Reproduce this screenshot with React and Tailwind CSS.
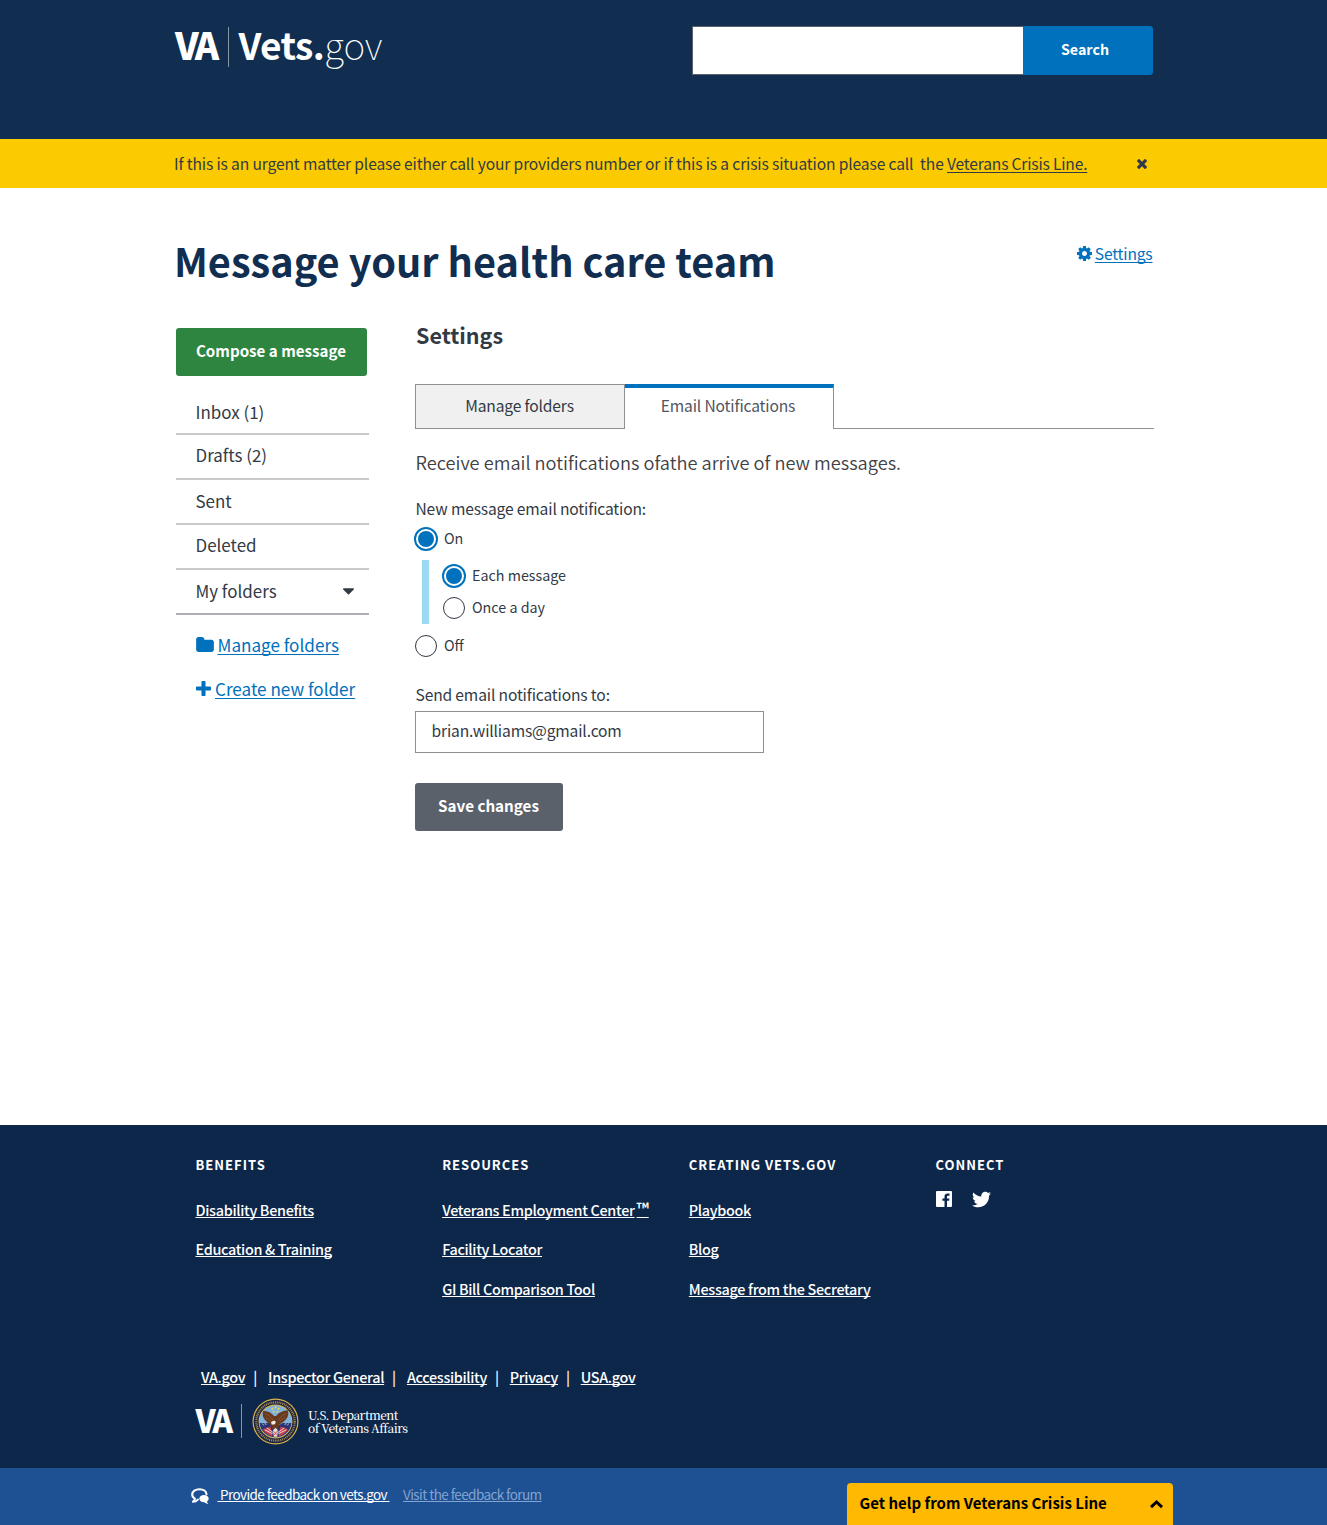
import React from "react";
import { FaCaretDown, FaTwitter } from "react-icons/fa";

const link =
  "underline decoration-1 underline-offset-2 [text-decoration-skip-ink:none]";
const footLink =
  "underline decoration-1 underline-offset-1 [text-decoration-skip-ink:none]";

function CogIcon({ className }) {
  return (
    <svg viewBox="0 128 1536 1536" className={className} fill="currentColor">
      <path d="M1024 896q0-106-75-181t-181-75-181 75-75 181 75 181 181 75 181-75 75-181zm512-109v222q0 12-8 23t-20 13l-185 28q-19 54-39 91 35 50 107 138 10 12 10 25t-9 23q-27 37-99 108t-94 71q-12 0-26-9l-138-108q-44 23-91 38-16 136-29 186-7 28-36 28h-222q-14 0-24.500-8.500t-11.500-21.500l-28-184q-49-16-90-37l-141 107q-10 9-25 9-14 0-25-11-126-114-165-168-7-10-7-23 0-12 8-23 15-21 51-66.500t54-70.500q-27-50-41-99l-183-27q-13-2-21-12.500t-8-23.500v-222q0-12 8-23t19-13l186-28q14-46 39-92-40-57-107-138-10-12-10-24 0-10 9-23 26-36 98.500-107.500t94.500-71.500q13 0 26 10l138 107q44-23 91-38 16-136 29-186 7-28 36-28h222q14 0 24.500 8.500t11.500 21.500l28 184q49 16 90 37l142-107q9-9 24-9 13 0 25 10 129 119 165 170 7 8 7 22 0 12-8 23-15 21-51 66.500t-54 70.500q26 50 41 98l183 28q13 2 21 12.500t8 23.500z" />
    </svg>
  );
}

function PlusIcon({ className }) {
  return (
    <svg viewBox="0 128 1408 1408" className={className} fill="currentColor">
      <path d="M1408 736v192q0 40-28 68t-68 28h-416v416q0 40-28 68t-68 28h-192q-40 0-68-28t-28-68v-416h-416q-40 0-68-28t-28-68v-192q0-40 28-68t68-28h416v-416q0-40 28-68t68-28h192q40 0 68 28t28 68v416h416q40 0 68 28t28 68z" />
    </svg>
  );
}

function FolderIcon({ className }) {
  return (
    <svg viewBox="0 128 1664 1408" className={className} fill="currentColor">
      <path d="M1664 608v704q0 92-66 158t-158 66h-1216q-92 0-158-66t-66-158v-960q0-92 66-158t158-66h320q92 0 158 66t66 158v32h672q92 0 158 66t66 158z" />
    </svg>
  );
}

function CloseIcon({ className }) {
  return (
    <svg viewBox="110 366 1188 1188" className={className} fill="currentColor">
      <path d="M1298 1322q0 40-28 68l-136 136q-28 28-68 28t-68-28l-294-294-294 294q-28 28-68 28t-68-28l-136-136q-28-28-28-68t28-68l294-294-294-294q-28-28-28-68t28-68l136-136q28-28 68-28t68 28l294 294 294-294q28-28 68-28t68 28l136 136q28 28 28 68t-28 68l-294 294 294 294q28 28 28 68z" />
    </svg>
  );
}

function Header() {
  return (
    <header className="h-[139px] bg-[#112e51]">
      <div className="mx-auto flex w-[979px] items-start justify-between pt-[26px]">
        <a className="flex h-[42px] items-start text-[37px] leading-[36px] text-white">
          <span className="w-[54px] pl-px font-black tracking-[-3.2px]">VA</span>
          <span className="mt-px h-10 w-px bg-white/50" />
          <span className="ml-[9.5px] font-bold tracking-[-0.6px]">Vets.</span>
          <span className="font-thin">gov</span>
        </a>
        <form className="flex h-[49px] w-[461px]">
          <input className="h-full w-[331px] border border-r-0 border-[#5b616b] bg-white px-3 outline-none" />
          <button
            type="button"
            className="h-full w-[130px] rounded-r-[3px] bg-[#0071bc] pb-[3px] pr-[6px] text-[14.25px] font-bold text-white"
          >
            Search
          </button>
        </form>
      </div>
    </header>
  );
}

function CrisisBanner() {
  return (
    <div className="h-[49px] bg-[#fbca00]">
      <div className="mx-auto flex h-full w-[979px] items-center justify-between">
        <p className="whitespace-pre pt-px text-[15.6px] tracking-[-0.138px] text-[#323a45]">
          If this is an urgent matter please either call your providers number or if this is a crisis
          situation please call{"  "}the{" "}
          <a className={`tracking-[-0.18px] ${link}`}>Veterans Crisis Line.</a>
        </p>
        <CloseIcon className="mr-[6.5px] mt-px size-[10px] text-[#323a45]" />
      </div>
    </div>
  );
}

const folders = [
  { label: "Inbox (1)", pad: "" },
  { label: "Drafts (2)", pad: "pb-[4px]" },
  { label: "Sent", pad: "pb-px" },
  { label: "Deleted", pad: "pb-[4px]" },
];

function Sidebar() {
  return (
    <nav className="ml-[2px] w-[193px] text-[16.95px] text-[#323a45]">
      <button className="flex h-12 w-[191px] items-center justify-center rounded-[3px] bg-[#2e8540] pb-[3px] text-[15.15px] font-bold text-white">
        Compose a message
      </button>
      <ul className="mt-[14px]">
        {folders.map((f) => (
          <li
            key={f.label}
            className={`flex h-[45px] items-center border-b-2 border-[#c9c9c9] pl-5 ${f.pad}`}
          >
            {f.label}
          </li>
        ))}
        <li className="flex h-[45px] items-center justify-between border-b-2 border-[#aeb0b5] pb-0.5 pl-5 pr-[11px]">
          My folders
          <FaCaretDown className="size-[19px]" />
        </li>
      </ul>
      <div className="mt-[18px] flex flex-col gap-5 pl-5 text-[17.1px] leading-6 text-[#0071bc]">
        <a className="flex items-center">
          <FolderIcon className="mb-px mr-[4px] h-[15px] w-[18px]" />
          <span className={link}>Manage folders</span>
        </a>
        <a className="flex items-center">
          <PlusIcon className="mb-px mr-[4.500px] size-[15px]" />
          <span className={link}>Create new folder</span>
        </a>
      </div>
    </nav>
  );
}

function Radio({ checked, label }) {
  return (
    <label className="flex h-6 items-center">
      {checked ? (
        <span className="flex size-6 items-center justify-center rounded-full border-2 border-[#0071bc]">
          <span className="size-4 rounded-full bg-[#0071bc]" />
        </span>
      ) : (
        <span className="mx-px size-[22px] rounded-full border border-[#323a45]" />
      )}
      <span className="pb-0.5 pl-[6.500px] text-[14.3px] leading-5">{label}</span>
    </label>
  );
}

function SettingsPanel() {
  return (
    <section className="w-[739px] text-[15.6px] tracking-[-0.15px] text-[#323a45]">
      <h2 className="-mt-[7px] ml-px pl-[0.5px] text-[21.5px] font-bold leading-[28px] tracking-normal">Settings</h2>
      <div className="mt-[35px] flex h-[45px] text-center leading-[20px]">
        <div className="w-[210px] border border-[#8d9095] bg-[#f0f0f0] pt-[10px]">Manage folders</div>
        <div className="w-[209px] border-r border-t-4 border-r-[#8d9095] border-t-[#0071bc] pr-px pt-[7px] text-[#4f5661]">
          Email Notifications
        </div>
        <div className="flex-1 border-b border-[#8d9095]" />
      </div>
      <p className="mt-[19px] pl-px font-['Noto_Sans_CJK_SC_DemiLight','Noto_Sans_CJK_SC',sans-serif] text-[18.22px] leading-[28px] tracking-normal text-[#3f4144]">
        Receive email notifications ofathe arrive of new messages.
      </p>
      <fieldset className="mt-[22px]">
        <legend className="pl-px leading-[20px]">New message email notification:</legend>
        <div className="-ml-px mt-[9px] tracking-normal">
          <Radio checked label="On" />
          <div className="ml-2 mt-[9px] flex h-16 flex-col justify-between border-l-[7px] border-[#9bdaf1] pb-1 pl-[13px] pt-1">
            <Radio checked label="Each message" />
            <Radio label="Once a day" />
          </div>
          <div className="mt-[10px]">
            <Radio label="Off" />
          </div>
        </div>
      </fieldset>
      <label className="mt-[25px] block pl-px leading-[22px]">Send email notifications to:</label>
      <input
        readOnly
        value="brian.williams@gmail.com"
        className="mt-[6px] block h-[42px] w-[349px] border border-[#8d9095] pb-[4px] pl-4 outline-none"
      />
      <button className="mt-[30px] flex h-12 w-[148px] items-center justify-center rounded-[3px] bg-[#5b616b] pb-[3px] text-[15.2px] font-bold tracking-normal text-white">
        Save changes
      </button>
    </section>
  );
}

function FacebookIcon() {
  return (
    <svg viewBox="0 0 16 16" className="size-4" fill="currentColor">
      <path d="M.9 0h14.2c.5 0 .9.4.9.9v14.2c0 .5-.4.9-.9.9H11V9.8h2.1l.3-2.4H11V5.9c0-.7.2-1.2 1.2-1.2h1.3V2.5c-.2 0-1-.1-1.900-.1-1.900 0-3.100 1.100-3.100 3.200v1.800H6.400v2.400h2.100V16H.9a.9.9 0 0 1-.9-.9V.9C0 .4.4 0 .9 0z" />
    </svg>
  );
}

function Seal() {
  return (
    <svg viewBox="0 0 48 48" className="mt-[2px] size-[47px]">
      <circle cx="24" cy="24" r="23.500" fill="#d9b44a" />
      <circle cx="24" cy="24" r="22.300" fill="#1d2340" />
      <circle cx="24" cy="24" r="19.600" fill="none" stroke="#a8965c" strokeWidth="2.200" strokeDasharray="1 .9" />
      <circle cx="24" cy="24" r="17.300" fill="#d9b44a" />
      <circle cx="24" cy="24" r="16.400" fill="#7fb2dc" />
      <path d="M7.700 25.500a16.400 16.400 0 0 0 32.600 0l-9 0-7 4-7-4z" fill="#2b3472" />
      <path d="M11 32l8-3 2 10.500c-4-1-7.500-3.500-10-7.500z" fill="#c5404c" />
      <path d="M37 32l-8-3-2 10.500c4-1 7.500-3.500 10-7.500z" fill="#c5404c" />
      <path d="M13 32.500l8 4M15 30.500l7 5M35 32.500l-8 4M33 30.500l-7 5" stroke="#f2e9e9" strokeWidth=".9" />
      <path d="M10.500 26l1.500 2M13 25.500l1.500 2M37.500 26l-1.500 2M35 25.500l-1.500 2" stroke="#e5e8f5" strokeWidth=".8" />
      <g fill="#f1d64b">
        <circle cx="24" cy="9.500" r="1" />
        <circle cx="20.800" cy="11" r="1" />
        <circle cx="27.200" cy="11" r="1" />
        <circle cx="22" cy="14" r="1" />
        <circle cx="26" cy="14" r="1" />
      </g>
      <path d="M11.500 13c4 .3 8 1.500 11 5.500l2 0c3-4 7-5.500 12-6 1.500 4 0 8.500-4 11.500l-4.500 3-1.500 4.500-1.500 2.500-3.500-1-1.500-4.500-4.500-4c-4-3-5.500-7.500-4-11.500z" fill="#6a3a1e" />
      <path d="M13.500 16c3 1 6 3 8 7M35 16c-3 1-6 3-8 7M14 20c3 1 5 3 6 5M34 20c-3 1-5 3-6 5" fill="none" stroke="#93603a" strokeWidth=".7" />
      <path d="M19.500 24.500l3-1.500 2 1.500-1.500 2.500-3 0z" fill="#f4efe6" />
      <path d="M21.500 33l2.500-2.500 2.500 2.500-.8 6.500h-3.400z" fill="#eadfd2" />
      <path d="M22 34l4 4M26.500 33l-4 5" stroke="#c5404c" strokeWidth=".9" />
    </svg>
  );
}

function ChatIcon() {
  return (
    <svg viewBox="0 0 18 16" className="h-4 w-[18px]" fill="none">
      <path
        d="M8.500 1.200c4 0 6.800 2.100 7 5M8.500 1.200C4.500 1.200 1.200 3.500 1.200 6.400c0 1.700 1 3.200 2.700 4.200-.2 1.200-.9 2.300-1.900 3.200 2 0 3.700-.9 4.900-2.200"
        stroke="#fff"
        strokeWidth="2.100"
        strokeLinejoin="round"
        strokeLinecap="round"
      />
      <path
        d="M13 6.900c2.600 0 4.700 1.600 4.700 3.700 0 1.200-.7 2.200-1.700 2.900.1.900.6 1.700 1.400 2.300-1.600.1-2.900-.5-3.800-1.500H13c-2.600 0-4.700-1.600-4.700-3.700S10.400 6.900 13 6.900z"
        fill="#fff"
      />
    </svg>
  );
}

const columns = [
  { title: "BENEFITS", links: ["Disability Benefits", "Education & Training"] },
  {
    title: "RESOURCES",
    links: [
      <>
        Veterans Employment Center<span className="pl-[2px] text-[17px] leading-[0]">™</span>
      </>,
      "Facility Locator",
      "GI Bill Comparison Tool",
    ],
  },
  { title: "CREATING VETS.GOV", links: ["Playbook", "Blog", "Message from the Secretary"] },
];

const legal = ["VA.gov", "Inspector General", "Accessibility", "Privacy", "USA.gov"];

function Footer() {
  return (
    <footer className="flex-1 bg-[#0d274a] text-white">
      <div className="h-[343px] pl-[195.5px] pt-[30px]">
        <div className="grid h-[143px] grid-cols-[repeat(4,246.67px)]">
          {columns.map((c) => (
            <div key={c.title}>
              <h3 className="text-[13px] font-bold leading-[19px] tracking-[1px]">{c.title}</h3>
              <ul className="mt-[26px] flex flex-col gap-[19.4px] text-[14.4px] font-medium leading-[20px] tracking-[-0.31px]">
                {c.links.map((l, i) => (
                  <li key={i} className="h-5">
                    <a className={footLink}>{l}</a>
                  </li>
                ))}
              </ul>
            </div>
          ))}
          <div>
            <h3 className="text-[13px] font-bold leading-[19px] tracking-[1px]">CONNECT</h3>
            <div className="mt-[15px] flex items-center gap-[20px] pl-[0.5px]">
              <FacebookIcon />
              <FaTwitter className="mt-px size-[19px]" />
            </div>
          </div>
        </div>
        <ul className="mt-[69px] flex pl-[5.5px] text-[14.4px] font-medium leading-[20px] tracking-[-0.33px]">
          {legal.map((l, i) => (
            <li key={l} className="flex">
              <a className={footLink}>{l}</a>
              {i < legal.length - 1 && <span className="w-[22.8px] pl-2">|</span>}
            </li>
          ))}
        </ul>
        <div className="mt-[10px] flex h-[47px] items-center">
          <span className="w-[45.5px] pb-[3px] text-[31.5px] font-black leading-[36px] tracking-[-2.8px]">VA</span>
          <span className="mr-[10px] mt-px h-[34px] w-px bg-white/50" />
          <Seal />
          <p className="ml-[9px] font-['Noto_Serif_CJK_SC','Liberation_Serif',serif] text-[12px] font-medium leading-[13px] tracking-[-0.55px]">
            U.S. Department
            <br />
            of Veterans Affairs
          </p>
        </div>
      </div>
      <div className="flex h-[57px] items-start bg-[#1d5194] pl-[191px] text-[13.5px] tracking-[-0.58px]">
        <div className="mt-5">
          <ChatIcon />
        </div>
        <a className={`ml-[8.5px] mt-4 whitespace-pre leading-[21px] ${footLink}`}>
          {"\u00a0Provide feedback on vets.gov\u00a0"}
        </a>
        <a className={`ml-[13.5px] mt-4 leading-[21px] text-[#84a3cd] ${footLink}`}>
          Visit the feedback forum
        </a>
        <div className="ml-auto mr-[154px] mt-[15px] flex h-[42px] w-[326px] items-start justify-between rounded-t-[4px] bg-[#ffb900] pl-[12.5px] pr-[9px] pt-[10px] text-[15px] font-bold leading-[20px] tracking-normal text-black">
          Get help from Veterans Crisis Line
          <svg viewBox="0 0 15 10" className="mt-[6px] h-[10px] w-[15px]" fill="none">
            <path d="M2 8.200l5.500-5.200L13 8.200" stroke="#000" strokeWidth="3" />
          </svg>
        </div>
      </div>
    </footer>
  );
}

export default function App() {
  return (
    <div className="flex min-h-[1525px] flex-col bg-white font-['Noto_Sans_CJK_SC','Noto_Sans',sans-serif]">
      <Header />
      <CrisisBanner />
      <main className="mx-auto h-[937px] w-[980px]">
        <div className="flex items-start justify-between">
          <h1 className="ml-[0.5px] mt-[46px] text-[39.7px] font-bold leading-[52px] text-[#112e51]">
            Message your health care team
          </h1>
          <a className="mr-px mt-[55px] flex items-center text-[15.6px] leading-[20px] tracking-[-0.18px] text-[#0071bc]">
            <CogIcon className="mr-[3px] size-[15px]" />
            <span className={link}>Settings</span>
          </a>
        </div>
        <div className="mt-[42px] flex justify-between">
          <Sidebar />
          <SettingsPanel />
        </div>
      </main>
      <Footer />
    </div>
  );
}
